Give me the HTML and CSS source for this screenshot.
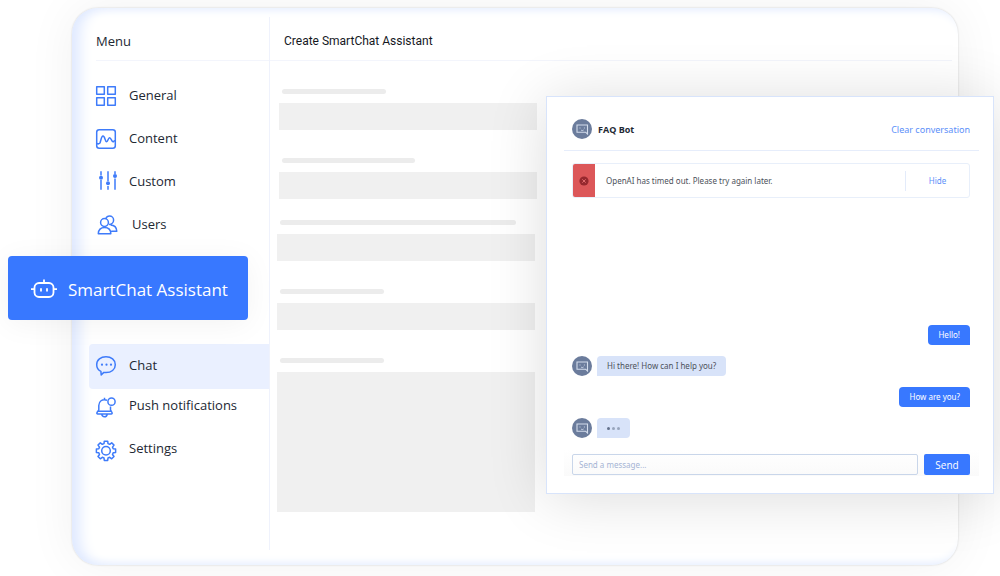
FILE: index.html
```html
<!DOCTYPE html>
<html lang="en">
<head>
<meta charset="utf-8">
<meta name="viewport" content="width=device-width, initial-scale=1">
<title>Create SmartChat Assistant</title>
<link rel="stylesheet" href="styles.css">
</head>
<body>
<svg class="sprite" aria-hidden="true">
  <symbol id="bot" viewBox="0 0 20 20">
    <circle cx="10" cy="10" r="10" fill="#6b7c9c"/>
    <path d="M5 6h10.500v9l-2-1.800H5z" fill="none" stroke="#d3dcec" stroke-width="1.100"/>
    <path d="M8 8.500v1M12.400 8.500v1M9 11c.8.7 1.800.7 2.600 0" fill="none" stroke="#d3dcec" stroke-width=".9"/>
  </symbol>
</svg>
<div class="window">
  <aside class="sidebar">
    <h2 class="bar menu-title">Menu</h2>
    <nav class="menu">
      <a class="item" href="#"><svg class="icon" viewBox="0 0 22 22"><path d="M.7 1.700h7.600v7.600H.7zM11.700 1.700h7.600v7.600h-7.600zM.7 12.700h7.600v7.600H.7zM11.700 12.700h7.600v7.600h-7.600z"/></svg>General</a>
      <a class="item" href="#"><svg class="icon" viewBox="0 0 22 22"><rect x=".7" y="1.700" width="18.600" height="18.600" rx="2.500"/><path d="M.7 15.500c1.300.6 2.200.5 3-.2C4.900 14.200 4.900 8 7 8s2 5.800 3.600 5.800c1.500 0 1.400-4 3-4s2 4 3.400 4c1 0 1-1.800 2.300-.8"/></svg>Content</a>
      <a class="item" href="#"><svg class="icon" viewBox="0 0 22 22"><path d="M5 .3V4.500M5 9v9.800M12 .3V10M12 15v3.800M19 .3V3M19 7.500v11.300"/><g class="solid"><circle cx="5" cy="6.700" r="2"/><circle cx="12" cy="12.300" r="2"/><circle cx="19" cy="5" r="2"/></g></svg>Custom</a>
      <a class="item item-indent" href="#"><svg class="icon" viewBox="0 0 22 22"><circle cx="6.500" cy="8.500" r="3.900"/><path d="M.3 19.800c0-4 2.500-6.300 6.200-6.300s6.300 2.300 6.300 6.300zM7.800 4.600C8.500 2.900 9.800 2 11.500 2c2.400 0 4.100 1.800 4.100 4s-1.700 4.500-4.600 4.500M12.500 11c3.800.1 6.100 2.400 6.300 6.300h-5.500"/></svg>Users</a>
      <a class="item active" href="#" aria-current="page"><svg class="icon" viewBox="0 0 22 22"><path d="M4.900 16.400C2.200 15.100.7 12.500.7 9.700.7 4.800 4.800 1.800 10 1.800s9.300 3 9.300 7.900-4.100 7.900-9.300 7.900c-.8 0-1.500 0-2.200-.2L5.200 20z"/><g class="solid"><circle cx="6" cy="9.700" r="1.100"/><circle cx="10.500" cy="9.700" r="1.100"/><circle cx="15" cy="9.700" r="1.100"/></g></svg>Chat</a>
      <a class="item item-short" href="#"><svg class="icon" viewBox="0 0 22 22"><path d="M11 3.200C6 1.800 2.800 4.300 2.800 8.500v4.300L1 15.500c-.4.800 0 1.400.8 1.400h13.400c.8 0 1.200-.6.8-1.400l-1.500-2.700V9.500M2.800 14.300h12M8.500.7v1.800M5.800 17.300c.3 3.300 5 3.300 5.400 0"/><circle cx="15.500" cy="4.700" r="3.600"/></svg>Push notifications</a>
      <a class="item" href="#"><svg class="icon" viewBox="0 0 22 22"><path d="M8 3.600 8.300 1.200h3.400l.3 2.400 1.700.7 2-1.500 2.300 2.300-1.500 2 .7 1.700 2.400.3v3.400l-2.400.3-.7 1.700 1.500 2-2.300 2.300-2-1.500-1.700.7-.3 2.400H8.300L8 18l-1.700-.7-2 1.500L2 16.500l1.500-2-.7-1.700-2.400-.3V9.100l2.400-.3.7-1.700-1.500-2 2.300-2.300 2 1.500z"/><circle cx="10" cy="10.800" r="4.300"/></svg>Settings</a>
    </nav>
  </aside>
  <main class="content">
    <h1 class="bar page-title">Create SmartChat Assistant</h1>
    <div class="fields">
      <div class="field inset"><span class="label w-104"></span><span class="box"></span></div>
      <div class="field inset"><span class="label w-133"></span><span class="box"></span></div>
      <div class="field raised"><span class="label w-236"></span><span class="box"></span></div>
      <div class="field"><span class="label w-104"></span><span class="box"></span></div>
      <div class="field"><span class="label w-104"></span><span class="box tall"></span></div>
    </div>
  </main>
</div>

<button class="assistant" type="button">
  <svg class="robot" viewBox="0 0 26 22"><rect x="3.500" y="4" width="19" height="14" rx="4.500"/><path d="M13 4V.5M0 10.200h3.500M22.500 10.200H26M10 9.200v3.200M16 9.200v3.200"/></svg>
  SmartChat Assistant
</button>

<section class="chat" aria-label="FAQ Bot">
  <header class="chat-head">
    <svg class="avatar"><use href="#bot"/></svg>
    <h2 class="chat-name">FAQ Bot</h2>
    <button class="link" type="button">Clear conversation</button>
  </header>
  <div class="alert" role="alert">
    <span class="alert-mark"><svg viewBox="0 0 10 10" width="10" height="10"><circle cx="5" cy="5" r="4.600" fill="#96282e"/><path d="M3.300 3.300l3.400 3.400M6.700 3.300L3.300 6.700" stroke="#df6a6c"/></svg></span>
    <p class="alert-text">OpenAI has timed out. Please try again later.</p>
    <button class="hide" type="button">Hide</button>
  </div>
  <div class="thread">
    <p class="bubble mine">Hello!</p>
    <div class="reply"><svg class="avatar"><use href="#bot"/></svg><p class="bubble">Hi there! How can I help you?</p></div>
    <p class="bubble mine">How are you?</p>
    <div class="reply"><svg class="avatar"><use href="#bot"/></svg><div class="bubble typing"><i></i><i></i><i></i></div></div>
  </div>
  <form class="composer">
    <input class="message" type="text" placeholder="Send a message..." aria-label="Send a message">
    <button class="send" type="button">Send</button>
  </form>
</section>
</body>
</html>
```
FILE: styles.css
```css
* { box-sizing: border-box; }

body {
  position: relative;
  display: flex;
  min-height: 100vh;
  margin: 0;
  padding: 8px 42px 11px 72px;
  overflow: hidden;
  background: #fff;
  color: #222833;
  font-family: "Open Sans", "Noto Sans", sans-serif;
  font-size: 13px;
}

h1, h2, p { margin: 0; font-weight: 400; }
button { margin: 0; padding: 0; border: 0; background: none; font-family: inherit; cursor: pointer; }
.sprite { position: absolute; width: 0; height: 0; }

.window {
  display: flex;
  flex: 1;
  border-radius: 26px;
  background: #fff;
  box-shadow:
    0 0 2px rgba(0, 0, 0, .18),
    0 0 50px rgba(0, 0, 0, .06),
    inset 14px 0 14px -6px #dfe9ff,
    inset 0 10px 10px -8px #e9f0ff,
    inset 0 -10px 10px -8px #e9f0ff;
}

.sidebar {
  width: 198px;
  margin: 9px 0 15px;
  border-right: 1px solid #eff2fc;
}

.bar {
  height: 44px;
  border-bottom: 1px solid #f3f5fc;
  line-height: 48px;
}

.menu-title { margin-left: 24px; font-size: 13px; }
.page-title { padding-left: 14px; color: #15181e; font-family: Roboto, sans-serif; font-size: 12px; }
.content { flex: 1; margin: 9px 6px 15px 0; }

.menu { display: flex; flex-direction: column; padding-top: 12px; }

.item {
  display: flex;
  align-items: center;
  gap: 11px;
  height: 43px;
  padding-left: 24px;
  color: #222833;
  text-decoration: none;
}

.item-indent { gap: 12px; padding-left: 26px; }
.item-short { height: 32px; margin-bottom: 5px; }

.item.active {
  height: 45px;
  margin: 99px 0 0 17px;
  padding: 0 0 4px 7px;
  border-radius: 4px 0 0 4px;
  background: #eaf0ff;
}

.icon {
  width: 22px;
  height: 22px;
  margin-top: 2px;
  overflow: visible;
  fill: none;
  stroke: #3e7bfa;
  stroke-width: 1.5;
  stroke-linejoin: round;
}

.item-short .icon, .item-short + .item .icon { margin-top: 6px; }

.solid { fill: #3e7bfa; stroke: none; }

.fields { display: flex; flex-direction: column; gap: 28px; padding: 28px 0 0 7px; }
.field { width: 258px; }
.field.inset { margin-left: 2px; }
.field.raised { margin-top: -7px; }

.label {
  display: block;
  height: 5px;
  margin: 0 0 9px 3px;
  border-radius: 3px;
  background: #ececec;
}

.w-104 { width: 104px; }
.w-133 { width: 133px; }
.w-236 { width: 236px; }

.box { display: block; height: 27px; background: #f0f0f0; }
.box.tall { height: 140px; }

.assistant {
  position: absolute;
  top: 256px;
  left: 8px;
  display: flex;
  align-items: center;
  gap: 11px;
  width: 240px;
  height: 64px;
  padding: 3px 0 0 23px;
  border-radius: 4px;
  background: #3878ff;
  box-shadow: 0 4px 30px rgba(0, 0, 0, .05);
  color: #fff;
  font-size: 17px;
}

.robot {
  width: 26px;
  height: 22px;
  fill: none;
  stroke: #fff;
  stroke-width: 1.8;
}

.chat {
  position: absolute;
  top: 96px;
  right: 6px;
  width: 448px;
  padding: 22px 14px 17px 17px;
  border: 1px solid #d8e4fb;
  background: #fff;
  box-shadow: 0 4px 56px rgba(0, 0, 0, .14);
  font-family: "Noto Sans", "Open Sans", sans-serif;
  font-size: 8px;
}

.chat-head {
  display: flex;
  align-items: center;
  height: 32px;
  padding: 0 9px 11px 8px;
  border-bottom: 1px solid #e6edfb;
}

.avatar { flex: none; width: 20px; height: 20px; }
.chat-name { flex: 1; margin-left: 6px; font-family: "Open Sans", sans-serif; font-size: 9px; font-weight: 700; }
.link { color: #5b8ff9; font-size: 9px; }

.alert {
  display: flex;
  align-items: center;
  height: 35px;
  margin: 12px 9px 0 8px;
  overflow: hidden;
  border: 1px solid #e8effa;
  border-radius: 3px;
}

.alert-mark {
  display: flex;
  align-items: center;
  justify-content: center;
  align-self: stretch;
  width: 23px;
  margin: -1px 0 -1px -1px;
  background: #dc5759;
}

.alert-text { flex: 1; padding-left: 11px; color: #4c515a; }

.hide {
  width: 64px;
  height: 20px;
  border-left: 1px solid #e3ebfa;
  color: #5b8ff9;
  font-size: 8px;
}

.thread {
  display: flex;
  flex-direction: column;
  align-items: flex-start;
  gap: 11px;
  margin: 127px 9px 0 8px;
}

.reply { display: flex; gap: 5px; }

.bubble {
  height: 20px;
  padding: 0 10px;
  border-radius: 4px 4px 4px 0;
  background: #d8e3f9;
  color: #4c515a;
  line-height: 20px;
}

.bubble.mine {
  align-self: flex-end;
  border-radius: 4px 4px 0;
  background: #3878ff;
  color: #fff;
}

.typing { display: flex; align-items: center; gap: 2px; }
.typing i { width: 3px; height: 3px; border-radius: 50%; background: #98a5bc; }
.typing i:first-child { background: #64728c; }

.composer {
  display: flex;
  gap: 6px;
  margin-top: 12px;
  padding: 4px 9px 1px 8px;
  background: linear-gradient(#fff, #fafafa);
}

.message {
  flex: 1;
  height: 21px;
  padding: 0 6px;
  border: 1px solid #c9d6ea;
  border-radius: 2px;
  background: transparent;
  font: inherit;
}

.message::placeholder { color: #a5b4d4; opacity: 1; }

.send {
  width: 46px;
  height: 21px;
  border-radius: 2px;
  background: #3878ff;
  color: #fff;
  font-family: "Open Sans", sans-serif;
  font-size: 10px;
}
```
